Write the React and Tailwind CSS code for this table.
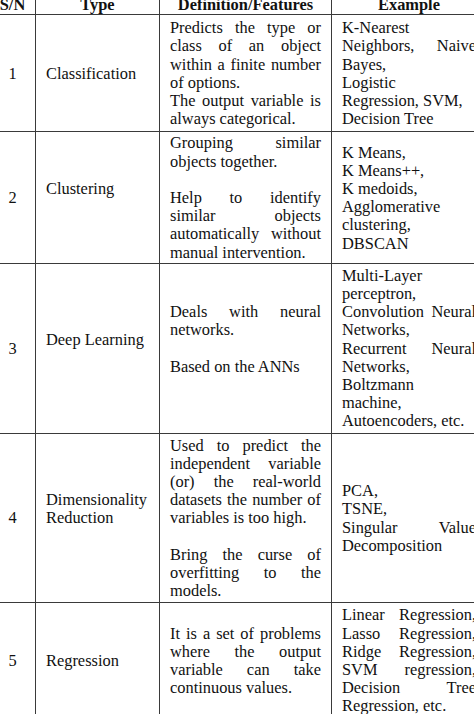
import React from 'react';

// each cell: list of paragraphs, null = blank line between paragraphs
// every line but the last of a paragraph is justified
const rows = [
    {
        sn: '1',
        pad: 'pt-[4px] pb-[3px]',
        type: [['Classification']],
        def: [
            ['Predicts the type or', 'class of an object', 'within a finite number', 'of options.'],
            ['The output variable is', 'always categorical.'],
        ],
        example: [
            ['K-Nearest', 'Neighbors, Naive', 'Bayes,'],
            ['Logistic', 'Regression, SVM,'],
            ['Decision Tree'],
        ],
    },
    {
        sn: '2',
        pad: 'pt-[2px] pb-[1px]',
        type: [['Clustering'], null],
        def: [
            ['Grouping similar', 'objects together.'],
            null,
            ['Help to identify', 'similar objects', 'automatically without', 'manual intervention.'],
        ],
        example: [['K Means,'], ['K Means++,'], ['K medoids,'], ['Agglomerative'], ['clustering,'], ['DBSCAN']],
    },
    {
        sn: '3',
        type: [['Deep Learning'], null],
        def: [['Deals with neural', 'networks.'], null, ['Based on the ANNs'], null],
        example: [
            ['Multi-Layer'],
            ['perceptron,'],
            ['Convolution Neural', 'Networks,'],
            ['Recurrent Neural', 'Networks,'],
            ['Boltzmann'],
            ['machine,'],
            ['Autoencoders, etc.'],
        ],
    },
    {
        sn: '4',
        type: [['Dimensionality'], ['Reduction'], null],
        def: [
            ['Used to predict the', 'independent variable', '(or) the real-world', 'datasets the number of', 'variables is too high.'],
            null,
            ['Bring the curse of', 'overfitting to the', 'models.'],
        ],
        example: [['PCA,'], ['TSNE,'], ['Singular Value', 'Decomposition']],
    },
    {
        sn: '5',
        type: [['Regression']],
        def: [['It is a set of problems', 'where the output', 'variable can take', 'continuous values.']],
        example: [
            [
                'Linear Regression,',
                'Lasso Regression,',
                'Ridge Regression,',
                'SVM regression,',
                'Decision Tree',
                'Regression, etc.',
            ],
        ],
    },
];

const Lines = ({ paragraphs }) => (
    <>
        {paragraphs.map((para, i) =>
            para === null ? (
                <div key={i} className="h-[18.2px]" />
            ) : (
                para.map((line, k) => (
                    <div
                        key={`${i}-${k}`}
                        className={k < para.length - 1 ? 'text-justify [text-align-last:justify]' : 'text-left'}
                    >
                        {line}
                    </div>
                ))
            )
        )}
    </>
);

const cell = 'border border-[#3a3a3a] align-middle';
const head = 'border border-[#3a3a3a] border-t-0 font-bold text-center py-0';

const App = () => {
    return (
        <div className="w-[474px] h-[714px] overflow-hidden bg-white">
            <table
                className="-mt-[4px] -ml-[11px] w-[497px] table-fixed border-collapse text-[#111] text-[16.4px] leading-[18.2px]"
                style={{ fontFamily: '"Liberation Serif", "Times New Roman", serif' }}
            >
                <colgroup>
                    <col className="w-[46px]" />
                    <col className="w-[124px]" />
                    <col className="w-[172px]" />
                    <col className="w-[155px]" />
                </colgroup>
                <thead>
                    <tr>
                        <th className={head}>S/N</th>
                        <th className={head}>Type</th>
                        <th className={head}>Definition/Features</th>
                        <th className={head}>Example</th>
                    </tr>
                </thead>
                <tbody>
                    {rows.map(row => {
                        const pad = row.pad || 'pt-[3px] pb-[2px]';
                        return (
                            <tr key={row.sn}>
                                <td className={`${cell} ${pad} text-center`}>{row.sn}</td>
                                <td className={`${cell} ${pad} pl-[10px] pr-[6px]`}>
                                    <Lines paragraphs={row.type} />
                                </td>
                                <td className={`${cell} ${pad} px-[10px]`}>
                                    <Lines paragraphs={row.def} />
                                </td>
                                <td className={`${cell} ${pad} px-[10px]`}>
                                    <Lines paragraphs={row.example} />
                                </td>
                            </tr>
                        );
                    })}
                </tbody>
            </table>
        </div>
    );
};

export default App;
